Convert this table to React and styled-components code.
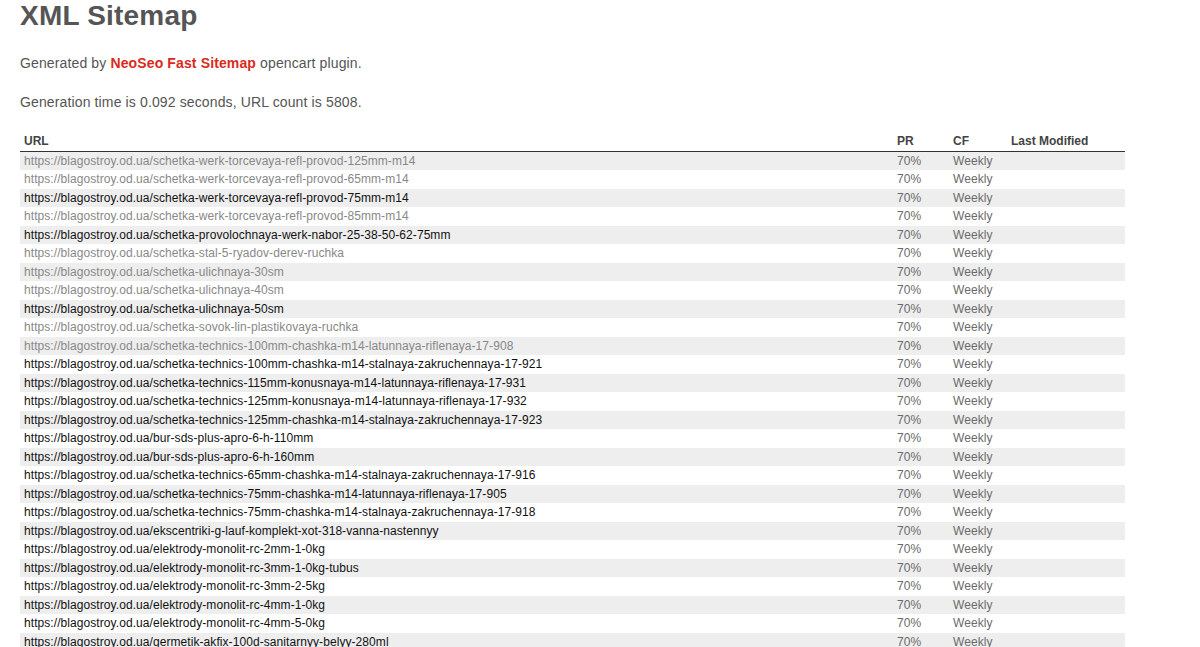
import React from "react";
import styled, { createGlobalStyle } from "styled-components";

const GlobalStyle = createGlobalStyle`
  body {
    margin: 0;
    background: #ffffff;
    font-family: Arial, "Liberation Sans", Helvetica, sans-serif;
    color: #555;
  }
`;

const Page = styled.div`
  padding: 0 20px;
`;

const Title = styled.h1`
  margin: 0;
  font-size: 28px;
  font-weight: bold;
  letter-spacing: 0.2px;
  color: #555;
`;

const Intro = styled.p`
  margin: 23px 0 0;
  font-size: 14px;
  letter-spacing: 0.13px;
  color: #555;
`;

const Brand = styled.a`
  color: #da2a1c;
  font-weight: bold;
  text-decoration: none;
`;

const Table = styled.table`
  margin-top: 22px;
  width: 1105px;
  table-layout: fixed;
  border-collapse: collapse;
  font-size: 12px;
`;

const HeadCell = styled.th`
  text-align: left;
  font-weight: bold;
  color: #444;
  padding: 2px 4px;
  line-height: 14.5px;
  border-bottom: 1px solid #333;
`;

const Row = styled.tr`
  background: ${(p) => (p.$odd ? "#eeeeee" : "#ffffff")};
`;

const Cell = styled.td`
  padding: 2px 4px;
  line-height: 14.5px;
  color: #6a6a6a;
  letter-spacing: 0.07px;
  white-space: nowrap;
  overflow: hidden;
`;

const UrlLink = styled.a`
  text-decoration: none;
  color: ${(p) => (p.$visited ? "#888" : "#111")};
`;

const BASE = "https://blagostroy.od.ua/";

const rows = [
  ["schetka-werk-torcevaya-refl-provod-125mm-m14", true],
  ["schetka-werk-torcevaya-refl-provod-65mm-m14", true],
  ["schetka-werk-torcevaya-refl-provod-75mm-m14", false],
  ["schetka-werk-torcevaya-refl-provod-85mm-m14", true],
  ["schetka-provolochnaya-werk-nabor-25-38-50-62-75mm", false],
  ["schetka-stal-5-ryadov-derev-ruchka", true],
  ["schetka-ulichnaya-30sm", true],
  ["schetka-ulichnaya-40sm", true],
  ["schetka-ulichnaya-50sm", false],
  ["schetka-sovok-lin-plastikovaya-ruchka", true],
  ["schetka-technics-100mm-chashka-m14-latunnaya-riflenaya-17-908", true],
  ["schetka-technics-100mm-chashka-m14-stalnaya-zakruchennaya-17-921", false],
  ["schetka-technics-115mm-konusnaya-m14-latunnaya-riflenaya-17-931", false],
  ["schetka-technics-125mm-konusnaya-m14-latunnaya-riflenaya-17-932", false],
  ["schetka-technics-125mm-chashka-m14-stalnaya-zakruchennaya-17-923", false],
  ["bur-sds-plus-apro-6-h-110mm", false],
  ["bur-sds-plus-apro-6-h-160mm", false],
  ["schetka-technics-65mm-chashka-m14-stalnaya-zakruchennaya-17-916", false],
  ["schetka-technics-75mm-chashka-m14-latunnaya-riflenaya-17-905", false],
  ["schetka-technics-75mm-chashka-m14-stalnaya-zakruchennaya-17-918", false],
  ["ekscentriki-g-lauf-komplekt-xot-318-vanna-nastennyy", false],
  ["elektrody-monolit-rc-2mm-1-0kg", false],
  ["elektrody-monolit-rc-3mm-1-0kg-tubus", false],
  ["elektrody-monolit-rc-3mm-2-5kg", false],
  ["elektrody-monolit-rc-4mm-1-0kg", false],
  ["elektrody-monolit-rc-4mm-5-0kg", false],
  ["germetik-akfix-100d-sanitarnyy-belyy-280ml", false],
  ["germetik-akfix-100d-sanitarnyy-prozrachnyy-280ml", false],
];

const App = () => {
  return (
    <Page>
      <GlobalStyle />
      <Title>XML Sitemap</Title>
      <Intro>
        Generated by <Brand href="#">NeoSeo Fast Sitemap</Brand> opencart plugin.
      </Intro>
      <Intro>Generation time is 0.092 seconds, URL count is 5808.</Intro>

      <Table>
        <colgroup>
          <col style={{ width: 873 }} />
          <col style={{ width: 56 }} />
          <col style={{ width: 58 }} />
          <col style={{ width: 118 }} />
        </colgroup>
        <thead>
          <tr>
            <HeadCell>URL</HeadCell>
            <HeadCell>PR</HeadCell>
            <HeadCell>CF</HeadCell>
            <HeadCell>Last Modified</HeadCell>
          </tr>
        </thead>
        <tbody>
          {rows.map(([slug, visited], i) => (
            <Row key={slug} $odd={i % 2 === 0}>
              <Cell>
                <UrlLink href="#" $visited={visited}>
                  {BASE + slug}
                </UrlLink>
              </Cell>
              <Cell>70%</Cell>
              <Cell>Weekly</Cell>
              <Cell></Cell>
            </Row>
          ))}
        </tbody>
      </Table>
    </Page>
  );
};

export default App;
